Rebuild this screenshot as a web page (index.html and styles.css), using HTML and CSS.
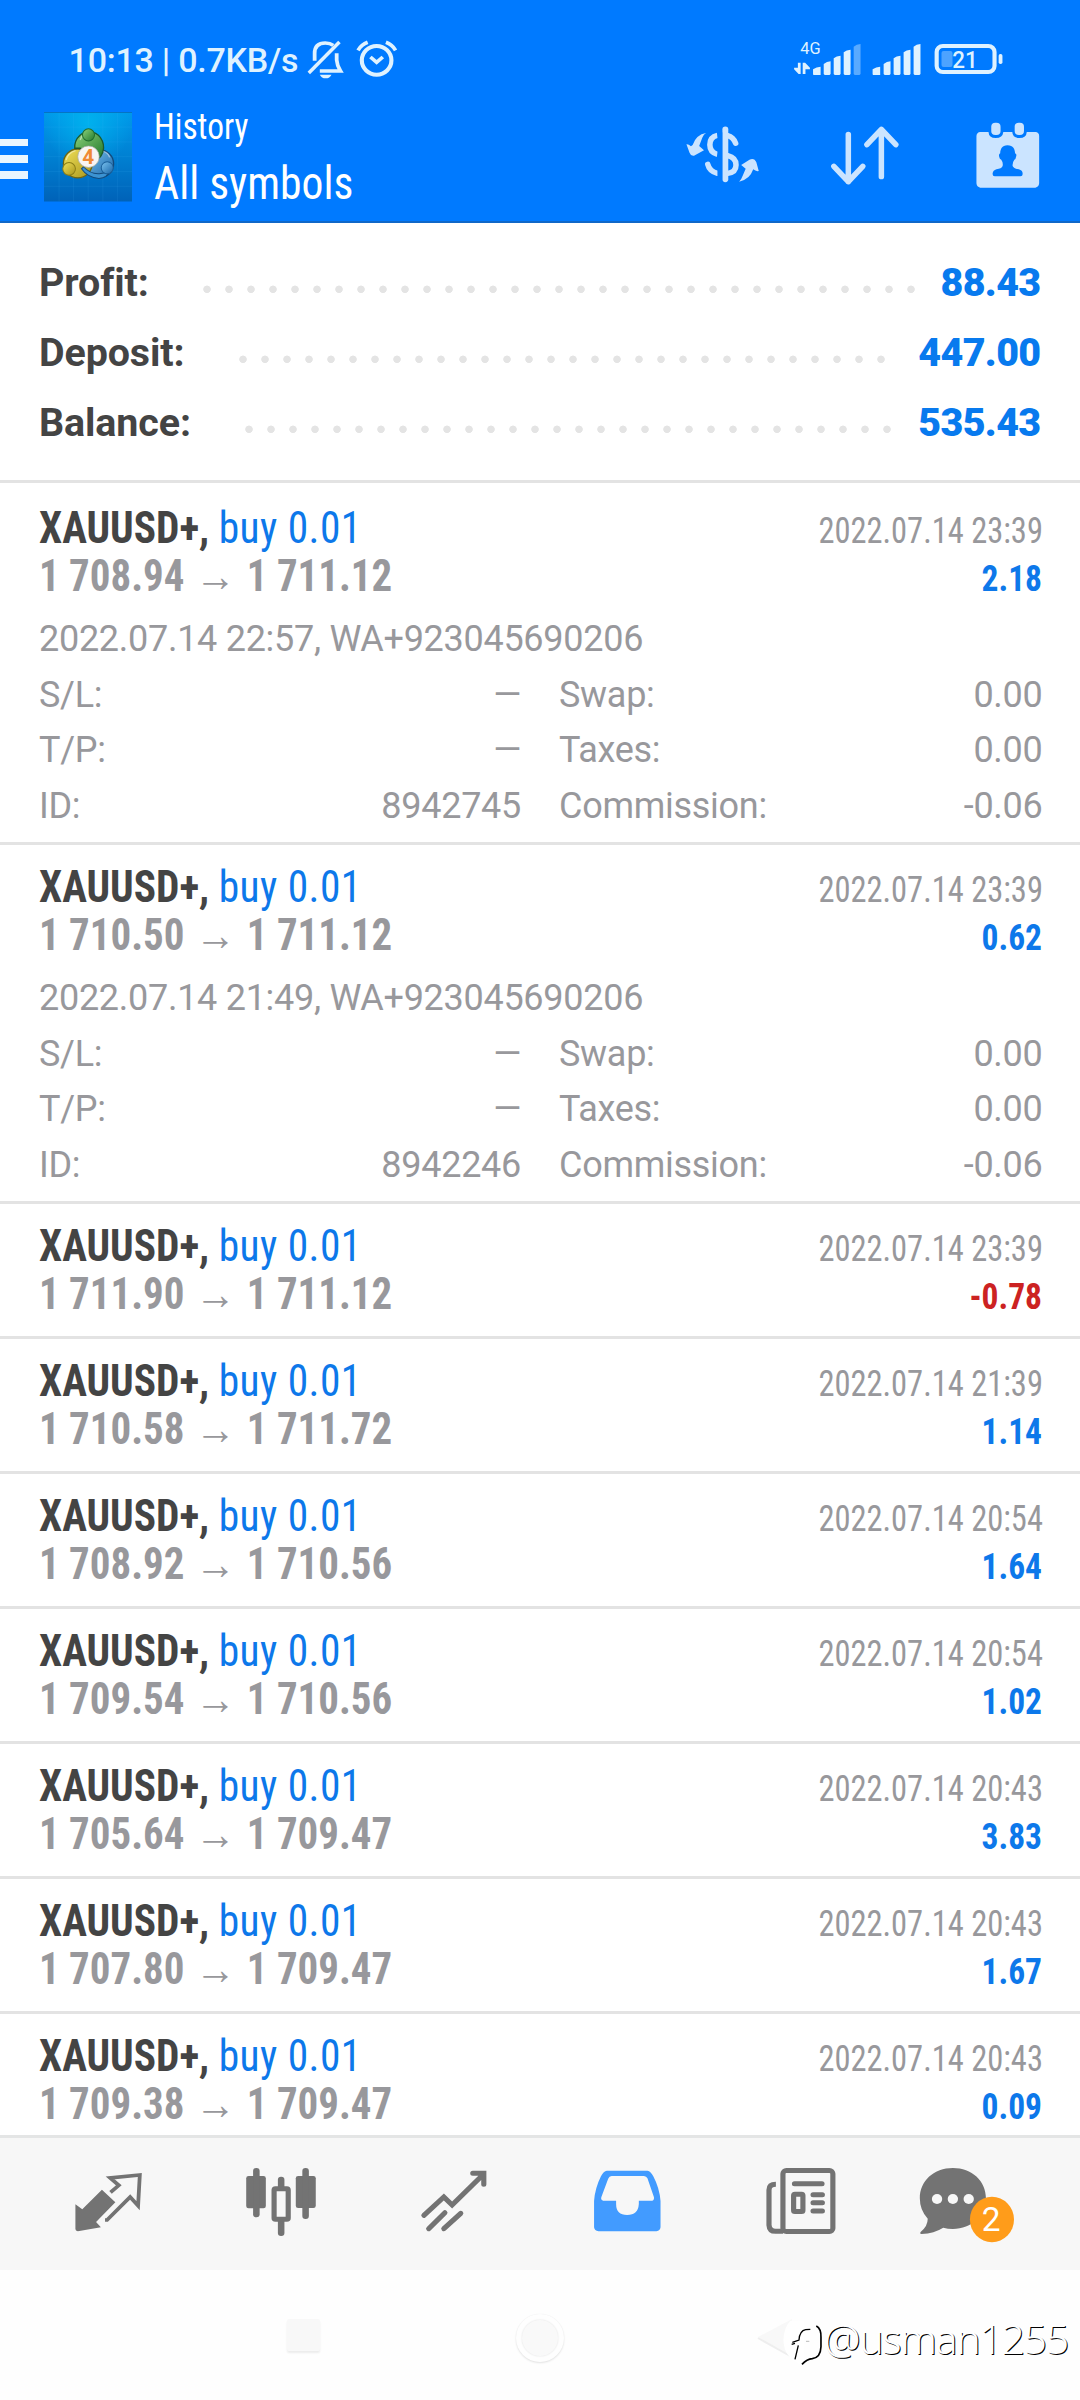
FILE: index.html
```html
<!DOCTYPE html>
<html lang="en">
<head>
<meta charset="utf-8">
<title>History</title>
<link rel="stylesheet" href="styles.css">
</head>
<body>
<header class="header">
  <div class="status">
    <span class="status-text">10:13 | 0.7KB/s</span>
    <svg class="status-left" viewBox="885 0 275 312" preserveAspectRatio="none" fill="none" stroke="#dff2ff" stroke-width="12">
      <path d="M913 182V160Q913 129 944 129Q958 129 967 136" stroke-width="11"/>
      <path d="M977 160V180Q978 196 988 213H928" stroke-width="11"/>
      <path d="M896 219L985 126" stroke-width="10"/>
      <path d="M928 224H962Q957 235 945 235Q933 235 928 224Z" fill="#dff2ff" stroke="none"/>
      <circle cx="1093" cy="181" r="43"/>
      <path d="M1075 171L1093 187L1111 171" stroke-width="11"/>
      <path d="M1039 151Q1049 134 1067 127M1148 151Q1138 134 1120 127" stroke-width="11"/>
    </svg>
    <svg class="status-right" viewBox="730 0 624 312" preserveAspectRatio="none" fill="#dff2ff">
      <text class="net" x="757" y="161" textLength="59" lengthAdjust="spacingAndGlyphs">4G</text>
      <path d="M750 188H758V222H752L739 208V203H750ZM764 188H771L785 203V208H772V222H764Z"/>
      <path d="M794 208Q804 201 816 200V225H796Q794 225 794 222ZM825 192Q834 184 845 184V222L842 225H828L825 222ZM854 175Q862 167 874 167V222L871 225H857L854 222ZM883 157Q891 150 903 149V222L900 225H886L883 222Z"/>
      <path d="M912 140Q920 133 932 132V222L929 225H915L912 222Z" opacity=".4"/>
      <path d="M967 208Q977 201 989 200V225H969Q967 225 967 222ZM999 192Q1008 184 1019 184V222L1016 225H1002L999 222ZM1028 175Q1036 167 1048 167V222L1045 225H1031L1028 222ZM1057 157Q1065 150 1077 149V222L1074 225H1060L1057 222ZM1086 140Q1094 133 1106 132V222L1103 225H1089L1086 222Z"/>
      <rect x="1153" y="138" width="168" height="78" rx="18" fill="none" stroke="#dff2ff" stroke-width="12"/>
      <rect x="1333" y="162" width="11" height="30" rx="5"/>
      <rect x="1167" y="153" width="32" height="48" rx="6" fill="#4da3ff"/>
      <text class="charge" x="1198" y="205" textLength="74" lengthAdjust="spacingAndGlyphs">21</text>
    </svg>
  </div>
  <div class="appbar">
    <div class="menu"><i></i><i></i><i></i></div>
    <svg class="logo" viewBox="42 37 263 266" preserveAspectRatio="none">
      <defs>
        <linearGradient id="bg" x1="0" y1="0" x2="0" y2="1"><stop offset="0" stop-color="#0099ea"/><stop offset=".5" stop-color="#0080d2"/><stop offset="1" stop-color="#0062b8"/></linearGradient>
        <radialGradient id="glow" cx=".5" cy=".12" r=".5"><stop offset="0" stop-color="#00b8f0" stop-opacity=".8"/><stop offset="1" stop-color="#00b8f0" stop-opacity="0"/></radialGradient>
        <linearGradient id="gr" x1="0" y1="0" x2="1" y2="1"><stop offset="0" stop-color="#8ed27c"/><stop offset="1" stop-color="#227a2c"/></linearGradient>
        <linearGradient id="ye" x1="0" y1="0" x2="1" y2="1"><stop offset="0" stop-color="#f2e25a"/><stop offset="1" stop-color="#a8951c"/></linearGradient>
        <linearGradient id="bl" x1="0" y1="0" x2="1" y2="1"><stop offset="0" stop-color="#7cc4f0"/><stop offset="1" stop-color="#1764a8"/></linearGradient>
      </defs>
      <path d="M42 37H305V303H42Z" fill="url(#bg)"/>
      <path d="M42 37H305V303H42Z" fill="url(#glow)"/>
      <path d="M87 37V303M130 37V303M174 37V303M218 37V303M262 37V303M42 82H305M42 126H305M42 170H305M42 214H305M42 258H305" stroke="#4fc0ff" stroke-opacity=".16" stroke-width="2" fill="none"/>
      <path d="M42 38H305" stroke="#0767b5" stroke-width="3"/>
      <circle cx="209" cy="191" r="41" fill="url(#bl)" stroke="#134a7c" stroke-width="4"/>
      <path d="M158 206Q180 230 214 226" stroke="#9bd4f5" stroke-width="3" fill="none"/>
      <circle cx="143" cy="190" r="43" fill="url(#ye)" stroke="#6d6414" stroke-width="4"/>
      <path d="M160 200Q182 224 212 220Q230 218 240 208Q232 234 206 235Q172 232 154 206Z" fill="#3c93d2" stroke="#134a7c" stroke-width="3"/>
      <path d="M134 145A43 46 0 1 1 214 165Q208 178 196 172L150 145Z" fill="url(#gr)" stroke="#1d5a2c" stroke-width="4"/>
      <path d="M150 120Q160 96 175 95M108 180Q114 158 136 152M238 172Q234 158 220 154" stroke="#fff" stroke-opacity=".45" stroke-width="4" fill="none"/>
      <circle cx="175" cy="105" r="18" fill="url(#gr)" stroke="#1f6c2d" stroke-width="3"/>
      <circle cx="117" cy="206" r="19" fill="url(#ye)" stroke="#8b7d17" stroke-width="3"/>
      <circle cx="231" cy="203" r="18" fill="url(#bl)" stroke="#195f9a" stroke-width="3"/>
      <circle cx="175" cy="170" r="32" fill="#f8f5f2" stroke="#a0a6a0" stroke-width="2"/>
      <text class="logo-num" x="174" y="191">4</text>
    </svg>
    <div class="titles"><div class="t1"><span>History</span></div><div class="t2"><span>All symbols</span></div></div>
    <svg class="act swap" viewBox="414 312 230 351" preserveAspectRatio="none">
      <path d="M481 402Q474 405 470 416L461 441L475 454L446 470Q437 472 433 461L424 436Q430 435 437 442L442 438Q452 407 481 402Z"/>
      <path d="M577 548Q584 541 588 529L596 509L583 498L607 482Q621 475 627 490L634 516Q626 518 618 511Q608 542 577 548Z"/>
      <g fill="none" stroke="#cbe4ff" stroke-linecap="round">
        <path d="M537 391V541" stroke-width="17"/>
        <path d="M544 410Q560 414 567 433" stroke-width="16"/>
        <path d="M544 470Q568 476 568 498T544 523" stroke-width="16"/>
        <path d="M514 409Q492 414 492 437T514 466" stroke-width="16" stroke-linecap="butt"/>
        <path d="M486 496Q491 517 514 523" stroke-width="16"/>
      </g>
      <path d="M514 400H528V550H514Z" fill="#007aff"/>
    </svg>
    <svg class="act sort" viewBox="837 312 214 351" preserveAspectRatio="none">
      <path d="M896 406V548M854 502L896 548L938 502M992 533V391M950 437L992 391L1034 437" fill="none" stroke="#cbe4ff" stroke-width="16" stroke-linecap="round" stroke-linejoin="round"/>
    </svg>
    <svg class="act cal" viewBox="1258 312 202 351" preserveAspectRatio="none">
      <path d="M1279 399H1303Q1304 417 1324 417T1346 399H1372Q1373 417 1393 417T1414 399H1439Q1450 400 1450 411V553Q1449 564 1439 566H1279Q1269 564 1268 553V411Q1269 400 1279 399Z"/>
      <rect x="1311" y="371" width="27" height="37" rx="12"/><rect x="1379" y="371" width="27" height="37" rx="12"/>
      <path d="M1358 439C1375 439 1380 452 1380 463Q1386 465 1383 473Q1382 481 1378 482Q1372 490 1373 501Q1376 509 1391 511Q1402 514 1402 523V526Q1402 532 1396 532H1321Q1315 532 1315 526V523Q1316 514 1326 511Q1341 509 1344 501Q1346 490 1340 482Q1335 480 1334 473Q1332 465 1337 463C1337 452 1342 439 1358 439Z" fill="#007aff"/>
    </svg>
  </div>
</header>

<section class="summary">
  <div class="sum"><span>Profit:</span><i class="leader"></i><b>88.43</b></div>
  <div class="sum"><span>Deposit:</span><i class="leader"></i><b>447.00</b></div>
  <div class="sum"><span>Balance:</span><i class="leader"></i><b>535.43</b></div>
</section>

<main class="list">
  <article class="trade first">
    <div class="line"><span class="name">XAUUSD+, <em>buy 0.01</em></span><time>2022.07.14 23:39</time></div>
    <div class="line"><span class="price">1 708.94 <i>→</i> 1 711.12</span><span class="val">2.18</span></div>
    <div class="detail">
      <p class="wide">2022.07.14 22:57, WA+923045690206</p>
      <p><span>S/L:</span><span>—</span></p><p><span>Swap:</span><span>0.00</span></p>
      <p><span>T/P:</span><span>—</span></p><p><span>Taxes:</span><span>0.00</span></p>
      <p><span>ID:</span><span>8942745</span></p><p><span>Commission:</span><span>-0.06</span></p>
    </div>
  </article>
  <article class="trade">
    <div class="line"><span class="name">XAUUSD+, <em>buy 0.01</em></span><time>2022.07.14 23:39</time></div>
    <div class="line"><span class="price">1 710.50 <i>→</i> 1 711.12</span><span class="val">0.62</span></div>
    <div class="detail">
      <p class="wide">2022.07.14 21:49, WA+923045690206</p>
      <p><span>S/L:</span><span>—</span></p><p><span>Swap:</span><span>0.00</span></p>
      <p><span>T/P:</span><span>—</span></p><p><span>Taxes:</span><span>0.00</span></p>
      <p><span>ID:</span><span>8942246</span></p><p><span>Commission:</span><span>-0.06</span></p>
    </div>
  </article>
  <article class="trade">
    <div class="line"><span class="name">XAUUSD+, <em>buy 0.01</em></span><time>2022.07.14 23:39</time></div>
    <div class="line"><span class="price">1 711.90 <i>→</i> 1 711.12</span><span class="val loss">-0.78</span></div>
  </article>
  <article class="trade">
    <div class="line"><span class="name">XAUUSD+, <em>buy 0.01</em></span><time>2022.07.14 21:39</time></div>
    <div class="line"><span class="price">1 710.58 <i>→</i> 1 711.72</span><span class="val">1.14</span></div>
  </article>
  <article class="trade">
    <div class="line"><span class="name">XAUUSD+, <em>buy 0.01</em></span><time>2022.07.14 20:54</time></div>
    <div class="line"><span class="price">1 708.92 <i>→</i> 1 710.56</span><span class="val">1.64</span></div>
  </article>
  <article class="trade">
    <div class="line"><span class="name">XAUUSD+, <em>buy 0.01</em></span><time>2022.07.14 20:54</time></div>
    <div class="line"><span class="price">1 709.54 <i>→</i> 1 710.56</span><span class="val">1.02</span></div>
  </article>
  <article class="trade">
    <div class="line"><span class="name">XAUUSD+, <em>buy 0.01</em></span><time>2022.07.14 20:43</time></div>
    <div class="line"><span class="price">1 705.64 <i>→</i> 1 709.47</span><span class="val">3.83</span></div>
  </article>
  <article class="trade">
    <div class="line"><span class="name">XAUUSD+, <em>buy 0.01</em></span><time>2022.07.14 20:43</time></div>
    <div class="line"><span class="price">1 707.80 <i>→</i> 1 709.47</span><span class="val">1.67</span></div>
  </article>
  <article class="trade">
    <div class="line"><span class="name">XAUUSD+, <em>buy 0.01</em></span><time>2022.07.14 20:43</time></div>
    <div class="line"><span class="price">1 709.38 <i>→</i> 1 709.47</span><span class="val">0.09</span></div>
  </article>
</main>

<nav class="tabs">
  <svg viewBox="63.9 54 502.4 396" preserveAspectRatio="none">
    <path d="M296 209L335 247L279 306L293 322L226 334Q219 333 219 327V253L239 268Z"/>
    <path d="M321 217L345 196L320 174L406 165L401 257L378 231L311 300H305" fill="none" stroke="#737373" stroke-width="11"/>
  </svg>
  <svg viewBox="566.3 54 502.4 396" preserveAspectRatio="none">
    <rect x="715" y="168" width="57" height="97" rx="7"/><rect x="735" y="144" width="19" height="148" rx="9"/>
    <rect x="859" y="168" width="58" height="96" rx="7"/><rect x="878" y="144" width="19" height="153" rx="9"/>
    <rect x="807" y="170" width="19" height="40" rx="9"/><rect x="807" y="295" width="19" height="53" rx="9"/>
    <rect x="796" y="206" width="41" height="92" rx="4" fill="#f7f7f7" stroke="#737373" stroke-width="15"/>
  </svg>
  <svg viewBox="1068.7 54 502.4 396" preserveAspectRatio="none">
    <path d="M1231 286L1289 231L1313 255L1404 163M1373 160H1405V193M1245 326L1292 278M1289 326L1338 280" fill="none" stroke="#737373" stroke-width="15" stroke-linecap="round"/>
  </svg>
  <svg viewBox="2.9 54 502.4 396" preserveAspectRatio="none">
    <path d="M194 152H312Q322 154 329 169Q347 204 350 243V322Q349 332 338 334H170Q158 332 157 322V243Q160 204 177 169Q185 153 194 152Z" fill="#429bff"/>
    <path d="M208 168H302Q309 169 312 175L331 232Q332 241 326 242H287V252Q285 285 253 285T221 252V242H183Q176 240 178 232L198 176Q201 169 208 168Z" fill="#f7f7f7"/>
  </svg>
  <svg viewBox="505.3 54 502.4 396" preserveAspectRatio="none">
    <g fill="none" stroke="#737373" stroke-width="15">
      <rect x="705.500" y="151.500" width="145" height="183" rx="10"/>
      <path d="M685 193Q665 193 665 210V315Q666 334 684 334H706"/>
      <path d="M739 191H819M793 224H820M793 248H820M793 273H820" stroke-linecap="round"/>
    </g>
    <rect x="736.500" y="222.500" width="27" height="52" rx="4" fill="none" stroke="#737373" stroke-width="15"/>
  </svg>
  <svg viewBox="1007.7 54 502.4 396" preserveAspectRatio="none">
    <path d="M1199 144C1254 144 1295 182 1295 235S1254 327 1199 327Q1184 327 1171 323Q1145 340 1108 342Q1101 341 1106 335Q1126 318 1126 296Q1103 271 1103 235C1103 182 1144 144 1199 144Z"/>
    <circle cx="1153" cy="237" r="15" fill="#f7f7f7"/><circle cx="1199" cy="237" r="15" fill="#f7f7f7"/><circle cx="1245" cy="237" r="15" fill="#f7f7f7"/>
    <ellipse cx="1312.500" cy="298.500" rx="64" ry="68" fill="#ff9c1a"/>
    <text class="count" x="1310" y="333">2</text>
  </svg>
</nav>

<footer class="sysnav">
  <span class="sq"></span>
  <span class="home"><i></i></span>
  <svg class="back" viewBox="0 0 37 40"><path d="M1 19L35 1V38Z" fill="#f8f8f8"/><path d="M1 20L35 39" stroke="#eee" stroke-width="2"/></svg>
  <div class="mark">
    <svg viewBox="98 60 130 150" fill="none">
      <path d="M120 62Q96 90 100 130Q104 165 130 182L160 200V62Z" fill="#fff"/>
      <path d="M134 178L144 136M124 133L134 130M126 127L146 120Q148 92 166 89L180 88" stroke="#000" stroke-width="4"/>
      <path d="M198 78Q213 86 212 112V140Q211 172 186 176Q170 177 155 193" stroke="#000" stroke-width="5"/>
      <path d="M167 124H177" stroke="#bbb" stroke-width="3"/>
    </svg>
    <span>@usman1255</span>
  </div>
</footer>
</body>
</html>
```
FILE: styles.css
```css
* { box-sizing: border-box; }
body {
  margin: 0;
  width: 1080px;
  height: 2400px;
  overflow: hidden;
  display: flex;
  flex-direction: column;
  background: #fff;
  font-family: Roboto, "Liberation Sans", sans-serif;
  color: #444;
}
svg { display: block; flex: none; }
i, em { font-style: normal; }

/* header */
.header { background: #007aff; border-bottom: 2px solid #1068c8; height: 223px; flex: none; }
.status { display: flex; height: 104px; padding: 0 73.7px 0 68.6px; }
.status-text { width: 236px; padding-top: 40px; font-size: 34px; line-height: 40px; font-weight: 500; letter-spacing: -.25px; color: #dff2ff; white-space: nowrap; }
.status-left { width: 94.700px; height: 104px; }
.status-right { width: 214.9px; height: 104px; margin-left: auto; }
.net { font-size: 48px; }
.charge { font-size: 70px; font-weight: 500; }
.appbar { display: flex; height: 117px; padding-right: 37.2px; }
.menu { width: 27.5px; margin: 34.5px 16.5px 0 0; display: flex; flex-direction: column; gap: 8.5px; }
.menu i { height: 7.8px; background: #eaf6ff; }
.logo { width: 88px; height: 89.4px; margin-top: 8.3px; }
.logo-num { font-size: 62px; font-weight: 700; fill: #f08a35; text-anchor: middle; }
.titles { margin-left: 21.6px; flex: 1; font-family: "Roboto Condensed", Roboto, sans-serif; color: #fff; white-space: nowrap; }
.titles span { display: inline-block; transform: scaleX(.928); transform-origin: 0 0; }
.t1 { font-size: 36px; line-height: 46px; }
.t2 { font-size: 47px; line-height: 60px; margin-top: 2.5px; }
.act { height: 117px; margin-top: -1px; fill: #cbe4ff; }
.swap { width: 79.2px; margin-right: 66.5px; }
.sort { width: 73.7px; margin-right: 71.3px; }
.cal { width: 69.6px; }

/* summary */
.summary { height: 260px; flex: none; padding: 24.5px 39.500px 0 39px; border-bottom: 3px solid #e3e3e3; font-size: 39.4px; line-height: 70px; font-weight: 700; }
.sum { display: flex; height: 70px; }
.sum span { letter-spacing: -.1px; }
.sum b { color: #087aee; letter-spacing: -.65px; }
.leader { flex: 1; margin: 0 21px 0 47.3px; background: radial-gradient(circle at 11px 41.3px, #e4e4e4 3.4px, transparent 4.1px) 0 0 / 22px 70px repeat-x; }

/* trades */
.list { flex: 1; overflow: hidden; }
.trade { padding: 18px 37.500px 18px 39px; border-bottom: 3px solid #e3e3e3; }
.first { padding-top: 21px; }
.trade:has(.detail) { padding-bottom: 7.7px; }
.line { display: flex; justify-content: space-between; align-items: baseline; height: 48px; line-height: 48px; font-family: "Roboto Condensed", Roboto, sans-serif; white-space: nowrap; }
.name { font-size: 44px; font-weight: 700; color: #444; transform: scaleX(.94); transform-origin: 0 0; }
.name em { font-weight: 400; color: #0d78ea; letter-spacing: .5px; }
.price { font-size: 44px; font-weight: 700; color: #98989c; transform: scaleX(.93); transform-origin: 0 0; }
.price i { margin: 0 1.4px; }
.line time { font-size: 36px; color: #98989c; transform: scaleX(.902); transform-origin: 100% 0; }
.val { font-size: 36px; font-weight: 700; color: #0d78ea; transform: scaleX(.93); transform-origin: 100% 0; }
.loss { color: #cc2222; }
.detail { display: grid; grid-template-columns: 482px 1fr; column-gap: 38px; margin-top: 12.3px; font-size: 36px; line-height: 55.5px; letter-spacing: -.28px; color: #98989c; }
.detail p { margin: 0; display: flex; justify-content: space-between; }
.detail .wide { grid-column: 1 / -1; }

/* bottom tabs */
.tabs { display: flex; flex: none; height: 135px; padding-left: 22px; background: #f7f7f7; border-top: 3px solid #e4e5e5; }
.tabs svg { width: 173px; height: 132px; fill: #737373; }
.tabs .count { font-size: 97px; fill: #fff; text-anchor: middle; }

/* system navigation */
.sysnav { position: relative; display: flex; flex: none; height: 130px; padding-left: 286.5px; background: #fefefe; }
.sq { width: 33px; height: 32px; margin-top: 49px; background: #f8f8f8; border-radius: 2px; box-shadow: 0 2px 2px #ececec; }
.home { width: 48px; height: 48px; margin: 44px 0 0 196.5px; padding: 6px; border-radius: 50%; background: #fefefe; box-shadow: 0 1px 2px #e2e2e2, 0 0 1px #eee; }
.home i { display: block; height: 36px; border-radius: 50%; background: #f9f9f9; box-shadow: 0 0 2px #e0e0e0; }
.back { width: 37px; height: 40px; margin: 48px 0 0 193px; }
.mark { position: absolute; left: 782.7px; top: 50px; display: flex; }
.mark svg { width: 43.3px; height: 50px; }
.mark span { margin-left: -2px; font-family: "Noto Sans", sans-serif; font-weight: 300; font-size: 41px; line-height: 37px; letter-spacing: -1.300px; color: #fff; text-shadow: 1px 1px .5px #000; }
```
